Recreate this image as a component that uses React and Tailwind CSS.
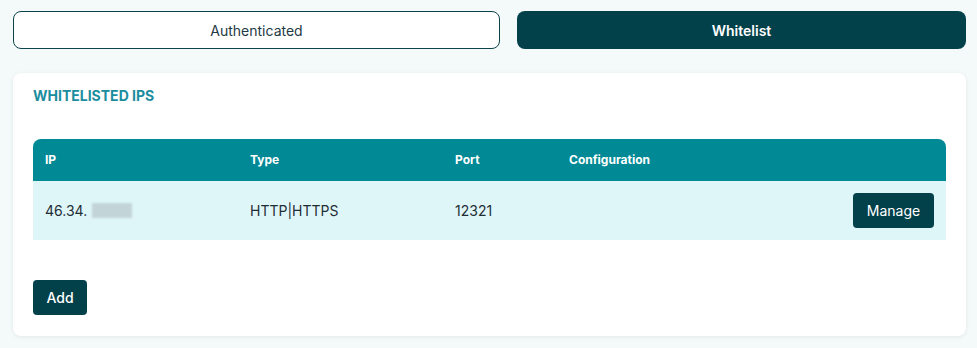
export default function App() {
  return (
    <div className="min-h-[348px] w-[977px] bg-[#f4f9fa] px-[13px] pt-[11px] font-['Inter',sans-serif]">
      <div className="flex gap-[17px] w-[953px]">
        <button className="w-[487px] h-[38px] rounded-lg border border-[#0b434a] bg-white text-[14px] text-[#1e3a44]">
          Authenticated
        </button>
        <button className="flex-1 h-[38px] rounded-lg bg-[#03414a] text-[14px] font-semibold text-white">
          Whitelist
        </button>
      </div>

      <div className="mt-[24px] w-[953px] rounded-lg bg-white px-[20px] pt-[13px] pb-[21px] shadow-[0_1px_4px_rgba(0,0,0,0.08)]">
        <h2 className="text-[14px] leading-[20px] font-bold text-[#1b8d9e]">WHITELISTED IPS</h2>

        <div className="mt-[33px] overflow-hidden rounded-t-lg">
          <div className="grid grid-cols-[205px_205px_114px_1fr] h-[42px] items-center bg-[#018a96] text-[12px] font-bold text-white">
            <div className="pl-[12px]">IP</div>
            <div className="pl-[12px]">Type</div>
            <div className="pl-[12px]">Port</div>
            <div className="pl-[12px]">Configuration</div>
          </div>
          <div className="grid grid-cols-[205px_205px_114px_1fr] h-[59px] items-center bg-[#dff6f8] text-[14px] text-[#1f2d36]">
            <div className="pl-[12px] flex items-center">
              46.34.
              <span className="ml-[5px] inline-block w-[40px] h-[15px] bg-[#c3d4d8] blur-[1px]"></span>
            </div>
            <div className="pl-[12px]">HTTP|HTTPS</div>
            <div className="pl-[12px]">12321</div>
            <div className="flex justify-end pr-[12px]">
              <button className="h-[35px] w-[81px] rounded bg-[#03414a] text-[14px] text-white">Manage</button>
            </div>
          </div>
        </div>

        <button className="mt-[40px] h-[35px] w-[54px] rounded bg-[#03414a] text-[14px] font-medium text-white">Add</button>
      </div>
    </div>
  );
}
